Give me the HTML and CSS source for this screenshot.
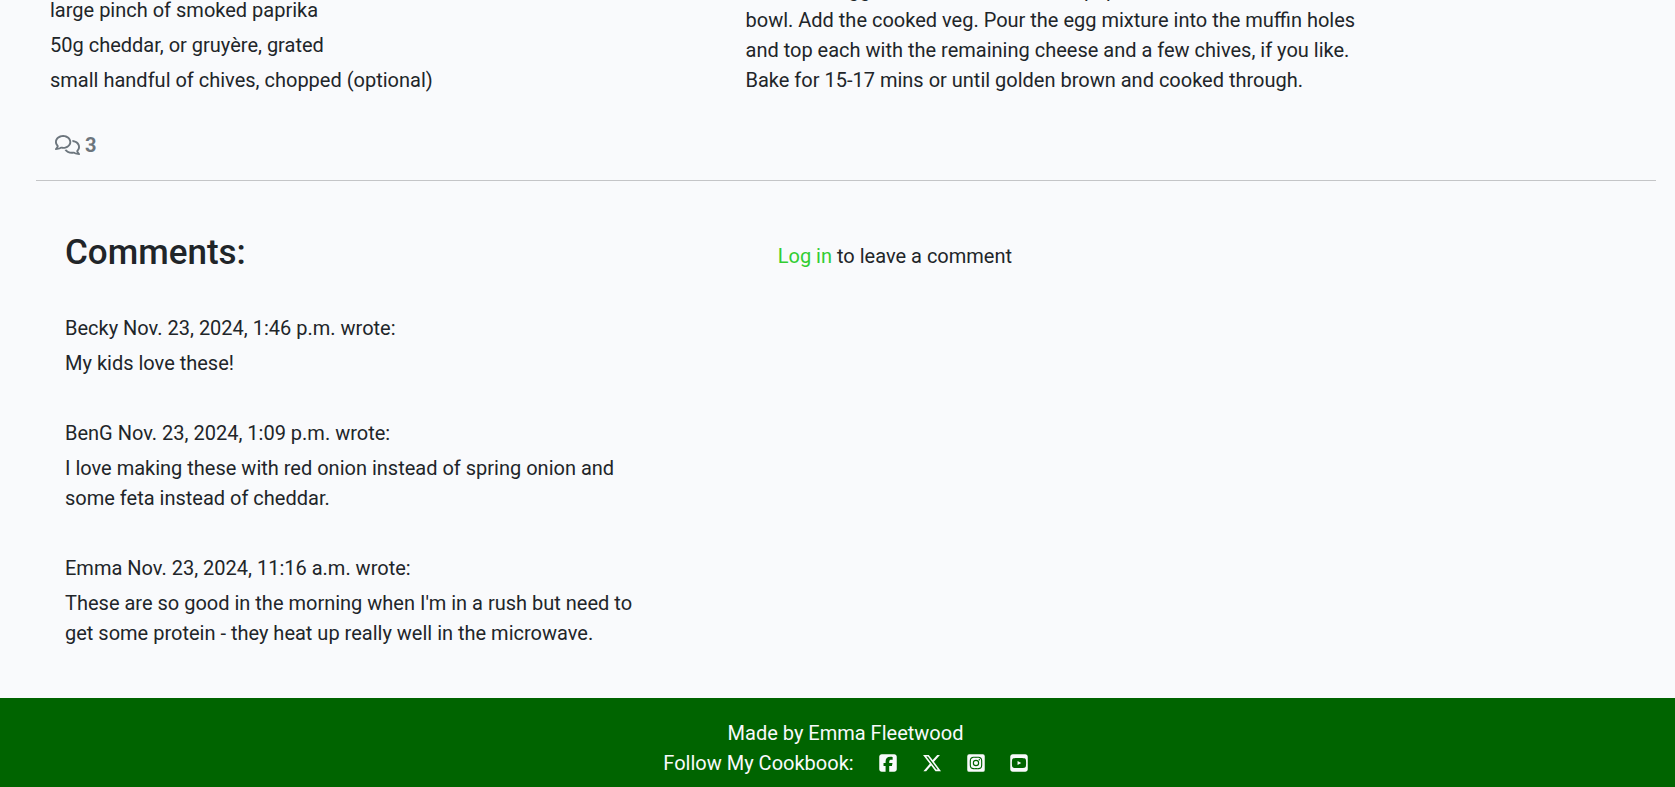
FILE: index.html
```html
<!DOCTYPE html>
<html lang="en">
<head>
  <meta charset="utf-8">
  <title>My Cookbook</title>
  <link rel="stylesheet" href="styles.css">
</head>
<body>
  <main>
    <section class="recipe">
      <ul class="ingredients">
        <li>large pinch of smoked paprika</li>
        <li>50g cheddar, or gruyère, grated</li>
        <li>small handful of chives, chopped (optional)</li>
      </ul>
      <p class="method">Whisk the eggs with the milk, smoked paprika and half the cheese in a bowl. Add the cooked veg. Pour the egg mixture into the muffin holes and top each with the remaining cheese and a few chives, if you like. Bake for 15-17 mins or until golden brown and cooked through.</p>
    </section>

    <div class="comment-count">
      <svg class="count-icon" viewBox="0 0 640 512" aria-hidden="true"><path d="M88.2 309.1c9.8-18.3 6.8-40.8-7.5-55.8C59.4 230.9 48 204 48 176c0-63.5 63.8-128 160-128s160 64.5 160 128s-63.8 128-160 128c-13.1 0-25.8-1.3-37.8-3.6c-10.4-2-21.2-.6-30.7 4.2c-4.1 2.1-8.3 4.1-12.6 6c-16 7.2-32.9 13.5-49.9 18c2.8-4.6 5.4-9.1 7.9-13.6c1.1-1.9 2.2-3.9 3.2-5.9zM0 176c0 41.8 17.2 80.1 45.9 110.3c-.9 1.7-1.9 3.5-2.8 5.1c-10.3 18.4-22.3 36.5-36.6 52.1c-6.6 7-8.3 17.2-4.6 25.9C5.8 378.3 14.4 384 24 384c43 0 86.5-13.3 122.7-29.7c4.8-2.2 9.6-4.5 14.2-6.8c15.1 3 30.9 4.5 47.1 4.5c114.9 0 208-78.8 208-176S322.9 0 208 0S0 78.8 0 176zM432 480c16.2 0 31.9-1.6 47.1-4.5c4.6 2.3 9.4 4.6 14.2 6.8C529.5 498.7 573 512 616 512c9.6 0 18.2-5.7 22-14.5c3.8-8.8 2-19-4.6-25.9c-14.2-15.6-26.2-33.7-36.6-52.1c-.9-1.7-1.9-3.4-2.8-5.1C622.8 384.1 640 345.8 640 304c0-94.4-87.9-171.5-198.2-175.8c4.1 15.2 6.2 31.2 6.2 47.8l0 .6c87.2 6.7 144 67.5 144 127.4c0 28-11.4 54.9-32.7 77.2c-14.3 15-17.3 37.6-7.5 55.8c1.1 2 2.2 4 3.2 5.9c2.5 4.5 5.2 9 7.9 13.6c-17-4.5-33.9-10.7-49.9-18c-4.3-1.9-8.5-3.9-12.6-6c-9.5-4.8-20.3-6.2-30.7-4.2c-12.1 2.4-24.8 3.6-37.8 3.6c-61.7 0-110-26.5-136.8-62.3c-16 5.4-32.8 9.4-50 11.8C279 439.8 350 480 432 480z"/></svg>
      <strong>3</strong>
    </div>

    <hr class="divider">

    <section class="comments">
      <div class="comment-list">
        <h2 class="comments-title">Comments:</h2>
        <article class="comment">
          <p>Becky Nov. 23, 2024, 1:46 p.m. wrote:</p>
          <p>My kids love these!</p>
        </article>
        <article class="comment">
          <p>BenG Nov. 23, 2024, 1:09 p.m. wrote:</p>
          <p>I love making these with red onion instead of spring onion and some feta instead of cheddar.</p>
        </article>
        <article class="comment">
          <p>Emma Nov. 23, 2024, 11:16 a.m. wrote:</p>
          <p>These are so good in the morning when I'm in a rush but need to get some protein - they heat up really well in the microwave.</p>
        </article>
      </div>
      <p class="login"><a href="#login">Log in</a> to leave a comment</p>
    </section>
  </main>

  <footer class="footer">
    <p>Made by Emma Fleetwood</p>
    <div class="social">
      <span>Follow My Cookbook:</span>
      <a href="#facebook" aria-label="Facebook"><svg viewBox="0 0 448 512" width="18" height="20" aria-hidden="true"><path d="M64 32C28.7 32 0 60.7 0 96V416c0 35.3 28.7 64 64 64h98.2V334.2H109.4V256h52.8V222.3c0-87.1 39.4-127.5 125-127.5c16.2 0 44.2 3.2 55.7 6.4V172c-6-.6-16.5-1-29.6-1c-42 0-58.2 15.9-58.2 57.2V256h83.6l-14.4 78.2H255V480H384c35.3 0 64-28.7 64-64V96c0-35.3-28.7-64-64-64H64z"/></svg></a>
      <a href="#x" aria-label="X"><svg viewBox="0 0 512 512" width="20" height="20" aria-hidden="true"><path d="M389.2 48h70.6L305.6 224.2 487 464H345L233.7 318.6 106.5 464H35.8L200.7 275.5 26.8 48H172.4L272.9 180.9 389.2 48zM364.4 421.8h39.1L151.1 88h-42L364.4 421.8z"/></svg></a>
      <a href="#instagram" aria-label="Instagram"><svg viewBox="0 0 448 512" width="18" height="20" aria-hidden="true"><path d="M224,202.66A53.34,53.34,0,1,0,277.36,256,53.38,53.38,0,0,0,224,202.66Zm124.71-41a54,54,0,0,0-30.41-30.41c-21-8.29-71-6.43-94.3-6.43s-73.25-1.93-94.31,6.43a54,54,0,0,0-30.41,30.41c-8.28,21-6.43,71.05-6.43,94.33S91,329.26,99.32,350.33a54,54,0,0,0,30.41,30.41c21,8.29,71,6.43,94.31,6.43s73.24,1.93,94.3-6.43a54,54,0,0,0,30.41-30.41c8.35-21,6.43-71.05,6.43-94.33S357.1,182.74,348.75,161.67ZM224,338a82,82,0,1,1,82-82A81.9,81.9,0,0,1,224,338Zm85.38-148.3a19.14,19.14,0,1,1,19.13-19.14A19.1,19.1,0,0,1,309.42,189.74ZM400,32H48A48,48,0,0,0,0,80V432a48,48,0,0,0,48,48H400a48,48,0,0,0,48-48V80A48,48,0,0,0,400,32ZM382.88,322c-1.29,25.63-7.14,48.34-25.85,67s-41.4,24.63-67,25.85c-26.41,1.49-105.59,1.49-132,0-25.63-1.29-48.26-7.15-67-25.85s-24.63-41.42-25.85-67c-1.49-26.42-1.49-105.61,0-132,1.29-25.63,7.07-48.34,25.85-67s41.47-24.56,67-25.78c26.41-1.49,105.59-1.49,132,0,25.63,1.29,48.33,7.15,67,25.85s24.63,41.42,25.85,67.05C384.37,216.44,384.37,295.56,382.88,322Z"/></svg></a>
      <a href="#youtube" aria-label="YouTube"><svg viewBox="0 0 448 512" width="18" height="20" aria-hidden="true"><path d="M282 256.2l-95.2-54.1V310.3L282 256.2zM384 32H64C28.7 32 0 60.7 0 96V416c0 35.3 28.7 64 64 64H384c35.3 0 64-28.7 64-64V96c0-35.3-28.7-64-64-64zm14.4 136.1c7.6 28.6 7.6 88.2 7.6 88.2s0 59.6-7.6 88.1c-4.2 15.8-16.5 27.7-32.2 31.9C337.9 384 224 384 224 384s-113.9 0-142.2-7.6c-15.7-4.2-28-16.1-32.2-31.9C42 315.9 42 256.3 42 256.3s0-59.7 7.6-88.2c4.2-15.8 16.5-28.2 32.2-32.4C110.1 128 224 128 224 128s113.9 0 142.2 7.7c15.7 4.2 28 16.6 32.2 32.4z"/></svg></a>
    </div>
  </footer>
</body>
</html>
```

FILE: styles.css
```css
* {
  box-sizing: border-box;
}

body {
  display: flow-root;
  margin: 0;
  background: #f9fafc;
  color: #212529;
  font: 400 20px/30px Roboto, sans-serif;
}

p,
ul,
h2 {
  margin: 0;
  padding: 0;
}

a {
  color: #32cd32;
  text-decoration: none;
}

svg {
  display: block;
  fill: currentColor;
}

/* The top of the recipe is scrolled out of view. */
.recipe {
  display: grid;
  grid-template-columns: 42.8% 39%;
  align-items: end;
  margin-top: -25px;
  padding-left: 50px;
}

.ingredients {
  display: grid;
  gap: 5px;
  list-style: none;
}

.comment-count {
  display: flex;
  align-items: center;
  gap: 5px;
  padding: 35px 0 20px 55px;
  color: #6c757d;
}

.count-icon {
  width: 25px;
  height: 20px;
}

.divider {
  height: 1px;
  margin: 0 19px 0 36px;
  border: 0;
  background: #c4c5c7;
}

.comments {
  display: grid;
  grid-template-columns: 36% 1fr;
  column-gap: 8.8%;
  padding: 50px 19px 50px 65px;
}

.comments-title {
  margin-bottom: 38px;
  font-size: 35px;
  font-weight: 500;
  line-height: 44px;
}

.comment + .comment {
  margin-top: 40px;
}

.comment p + p {
  margin-top: 5px;
}

.login {
  padding-top: 10px;
}

.footer {
  padding: 20px 0 9px 16px;
  background: #006400;
  color: #f9fafc;
  text-align: center;
}

.social {
  display: flex;
  align-items: center;
  justify-content: center;
  gap: 25px;
}

.social a {
  color: inherit;
}
```
